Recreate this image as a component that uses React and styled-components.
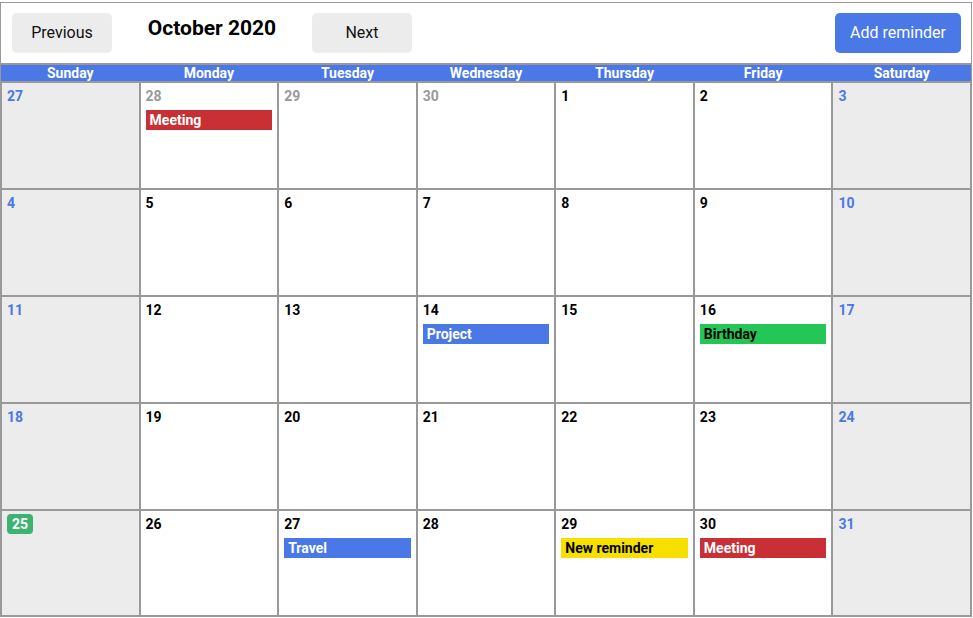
import React from "react";
import styled, { createGlobalStyle } from "styled-components";

const Global = createGlobalStyle`
  html, body { margin: 0; padding: 0; background: #fff; }
  body { padding-top: 2px; font-family: Roboto, "Liberation Sans", sans-serif; }
  * { box-sizing: border-box; }
`;

const Calendar = styled.div`
  width: 972px;
  height: 615px;
  border: 1px solid #999;
  display: flex;
  flex-direction: column;
`;

const Header = styled.div`
  height: 62px;
  flex: none;
  border-bottom: 2px solid #999;
  display: flex;
  align-items: flex-start;
  padding: 10px 10px 10px 11px;
`;

const NavButton = styled.button`
  width: 100px;
  height: 40px;
  border: none;
  border-radius: 5px;
  background: #ececec;
  color: #111;
  font-family: inherit;
  font-size: 16px;
  padding: 0 0 1px;
`;

const Title = styled.div`
  width: 200px;
  text-align: center;
  font-size: 21px;
  font-weight: 700;
  line-height: 30px;
  color: #000;
`;

const AddButton = styled.button`
  margin-left: auto;
  height: 40px;
  padding: 0 15px 1px;
  border: none;
  border-radius: 5px;
  background: #4a78e6;
  color: #fff;
  font-family: inherit;
  font-size: 16px;
`;

const WeekBar = styled.div`
  flex: none;
  display: grid;
  grid-template-columns: repeat(7, 1fr);
  background: #4a78e6;
  border-bottom: 1px solid #999;
`;

const WeekDay = styled.div`
  text-align: center;
  color: #fff;
  font-weight: 700;
  font-size: 14px;
  line-height: 15px;
  padding-top: 1px;
`;

const Grid = styled.div`
  flex: 1;
  display: grid;
  grid-template-columns: repeat(7, 1fr);
  grid-template-rows: repeat(4, 107px) 1fr;
  min-height: 0;
`;

const Cell = styled.div`
  border: 1px solid #999;
  background: ${(p) => (p.$weekend ? "#ececec" : "#fff")};
  padding: 5px;
  min-width: 0;
  overflow: hidden;
  font-size: 14px;
  line-height: 16px;
`;

const DayNum = styled.div`
  display: inline-block;
  vertical-align: top;
  font-size: 14px;
  font-weight: 700;
  line-height: 16px;
  color: ${(p) => p.$color};
  ${(p) =>
    p.$today &&
    `
    background: #3cb371;
    color: #fff;
    padding: 2px 5px;
    margin: -2px 0;
    border-radius: 4px;
  `}
`;

const Event = styled.div`
  margin-top: 6px;
  height: 20px;
  line-height: 20px;
  padding-left: 4px;
  font-size: 14px;
  font-weight: 700;
  background: ${(p) => p.$bg};
  color: ${(p) => p.$fg};
  white-space: nowrap;
  overflow: hidden;
`;

const COLORS = {
  red: { bg: "#c93035", fg: "#fff" },
  blue: { bg: "#4a78e6", fg: "#fff" },
  green: { bg: "#24c655", fg: "#000" },
  yellow: { bg: "#f7e000", fg: "#000" },
};

const EVENTS = {
  "p28": { text: "Meeting", c: "red" },
  "c14": { text: "Project", c: "blue" },
  "c16": { text: "Birthday", c: "green" },
  "c27": { text: "Travel", c: "blue" },
  "c29": { text: "New reminder", c: "yellow" },
  "c30": { text: "Meeting", c: "red" },
};

const days = ["Sunday", "Monday", "Tuesday", "Wednesday", "Thursday", "Friday", "Saturday"];

const cells = [];
[27, 28, 29, 30].forEach((d) => cells.push({ d, cur: false }));
for (let d = 1; d <= 31; d++) cells.push({ d, cur: true });

export default function App() {
  return (
    <>
      <Global />
      <Calendar>
        <Header>
          <NavButton>Previous</NavButton>
          <Title>October 2020</Title>
          <NavButton>Next</NavButton>
          <AddButton>Add reminder</AddButton>
        </Header>
        <WeekBar>
          {days.map((d) => (
            <WeekDay key={d}>{d}</WeekDay>
          ))}
        </WeekBar>
        <Grid>
          {cells.map((c, i) => {
            const col = i % 7;
            const weekend = col === 0 || col === 6;
            const color = weekend ? "#4a78e6" : c.cur ? "#000" : "#999";
            const ev = EVENTS[(c.cur ? "c" : "p") + c.d];
            const today = c.cur && c.d === 25;
            return (
              <Cell key={i} $weekend={weekend}>
                <DayNum $color={color} $today={today}>
                  {c.d}
                </DayNum>
                {ev && (
                  <Event $bg={COLORS[ev.c].bg} $fg={COLORS[ev.c].fg}>
                    {ev.text}
                  </Event>
                )}
              </Cell>
            );
          })}
        </Grid>
      </Calendar>
    </>
  );
}
